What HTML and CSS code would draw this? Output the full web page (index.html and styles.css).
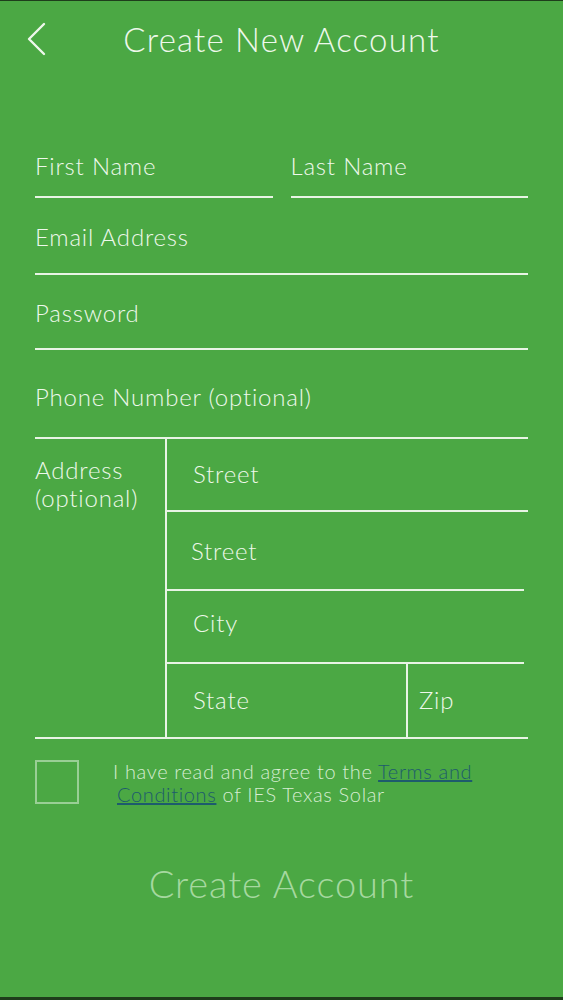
FILE: index.html
```html
<!DOCTYPE html>
<html lang="en">
<head>
    <meta charset="UTF-8">
    <meta name="viewport" content="width=device-width, initial-scale=1.0">
    <title>Create New Account</title>
    <link rel="stylesheet" href="styles.css">
</head>
<body>
    <div class="screen">
        <header class="topbar">
            <button type="button" class="back" aria-label="Back">
                <svg width="20" height="34" viewBox="0 0 20 34">
                    <polyline points="17,2 2,17 17,32" fill="none" stroke="#eef7ec" stroke-width="2.4" stroke-linecap="round" stroke-linejoin="round"/>
                </svg>
            </button>
            <h1 class="title">Create New Account</h1>
            <div></div>
        </header>

        <form class="signup" id="signupForm">
            <div class="name-row">
                <div class="field field-name"><span class="label">First Name</span></div>
                <div class="field field-name"><span class="label">Last Name</span></div>
            </div>
            <div class="field field-email"><span class="label">Email Address</span></div>
            <div class="field field-password"><span class="label">Password</span></div>
            <div class="field field-phone"><span class="label">Phone Number (optional)</span></div>

            <div class="address">
                <div class="address-title">Address<br>(optional)</div>
                <div class="address-fields">
                    <div class="field cell street-1"><span class="label">Street</span></div>
                    <div class="field cell street-2"><span class="label">Street</span></div>
                    <div class="field cell city"><span class="label">City</span></div>
                    <div class="state-zip">
                        <div class="cell state"><span class="label">State</span></div>
                        <div class="cell zip"><span class="label">Zip</span></div>
                    </div>
                </div>
            </div>

            <div class="terms">
                <span class="checkbox"></span>
                <p class="terms-text">I have read and agree to the <a href="#">Terms and</a><br><a href="#" class="wrap-link">Conditions</a> of IES Texas Solar</p>
            </div>

            <button type="submit" class="submit">Create Account</button>
        </form>
    </div>
</body>
</html>
```

FILE: styles.css
```css
body {
    margin: 0;
    background: #4ba844;
    font-family: Lato, "Open Sans", sans-serif;
    font-weight: 300;
    color: #eef8eb;
}
.screen {
    box-sizing: border-box;
    height: 1000px;
    border-top: 1px solid #1e3d1b;
    border-bottom: 3px solid #1e3d1b;
}

/* header */
.topbar {
    height: 75px;
    display: grid;
    grid-template-columns: 1fr auto 1fr;
    align-items: center;
}
.back {
    justify-self: start;
    margin-left: 27px;
    padding: 0;
    border: none;
    background: none;
    display: flex;
}
.title {
    margin: 0;
    font-size: 33px;
    font-weight: 300;
    line-height: 38px;
    letter-spacing: 1.2px;
}

/* form */
.signup {
    padding: 0 35px;
    display: flex;
    flex-direction: column;
}
.field {
    box-sizing: border-box;
    display: flex;
    align-items: flex-end;
    border-bottom: 2px solid #e8f4e5;
}
.label {
    font-size: 24px;
    line-height: 30px;
    letter-spacing: 0.8px;
}
.name-row {
    display: flex;
    gap: 18px;
}
.field-name {
    flex: 1;
    height: 122px;
    padding-bottom: 15px;
}
.field-email {
    height: 77px;
    padding-bottom: 21px;
}
.field-password {
    height: 75px;
    padding-bottom: 20px;
}
.field-phone {
    height: 89px;
    padding-bottom: 25px;
}

/* address block */
.address {
    display: flex;
    border-bottom: 2px solid #e8f4e5;
}
.address-title {
    width: 130px;
    padding-top: 17px;
    font-size: 24px;
    line-height: 28px;
    letter-spacing: 0.8px;
    border-right: 2px solid #e8f4e5;
}
.address-fields {
    flex: 1;
    display: flex;
    flex-direction: column;
}
.cell {
    box-sizing: border-box;
    padding-left: 26px;
}
.street-1 {
    height: 73px;
    padding-bottom: 21px;
}
.street-2 {
    height: 79px;
    padding-bottom: 23px;
    padding-left: 24px;
    margin-right: 4px;
}
.city {
    height: 73px;
    padding-bottom: 24px;
    margin-right: 4px;
}
.state-zip {
    display: flex;
    height: 73px;
}
.state-zip .cell {
    display: flex;
    align-items: flex-end;
    padding-bottom: 22px;
}
.state {
    width: 241px;
    border-right: 2px solid #e8f4e5;
}
.zip {
    flex: 1;
    padding-left: 11px !important;
}

/* terms */
.terms {
    display: flex;
    gap: 34px;
    margin-top: 21px;
}
.checkbox {
    width: 40px;
    height: 40px;
    border: 2px solid rgba(232, 246, 229, 0.5);
}
.terms-text {
    margin: 0;
    font-size: 20px;
    line-height: 23px;
    letter-spacing: 0.65px;
    color: #d6edd2;
}
.terms-text a {
    color: #1d5b6d;
}
.wrap-link {
    margin-left: 4px;
}

.submit {
    margin-top: 54px;
    align-self: center;
    padding: 0;
    border: none;
    background: none;
    font-family: Lato, "Open Sans", sans-serif;
    font-size: 38px;
    font-weight: 300;
    line-height: 46px;
    letter-spacing: 0.9px;
    color: #a6d8a0;
}
```
